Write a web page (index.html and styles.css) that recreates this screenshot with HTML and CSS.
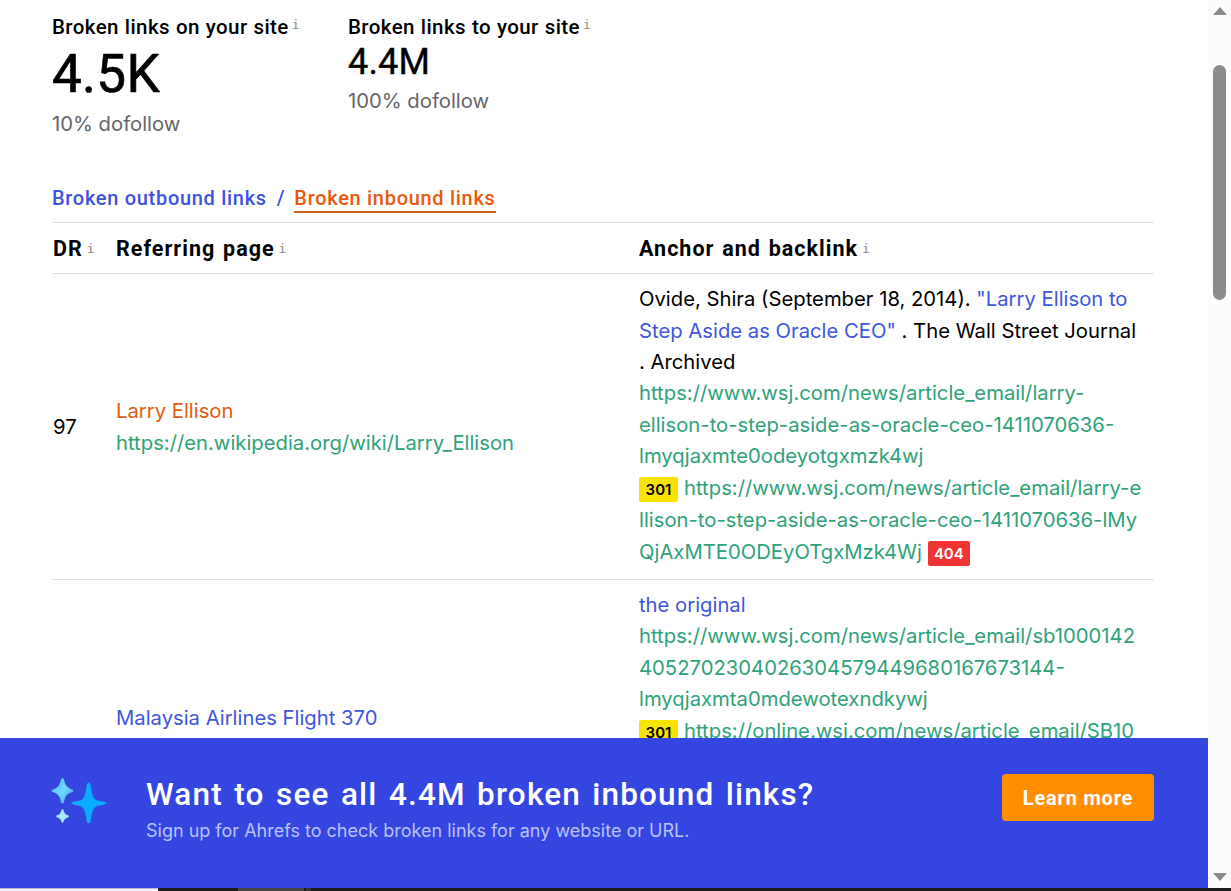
FILE: index.html
```html
<!DOCTYPE html>
<html lang="en">
<head>
<meta charset="utf-8">
<title>Broken link checker</title>
<link rel="stylesheet" href="styles.css">
</head>
<body>
<div class="screen">
  <div class="viewport">
    <div class="page">
      <main class="report">
        <section class="stats">
          <div class="stat stat-main">
            <div class="stat-label"><span>Broken links on your site</span><sup class="info">i</sup></div>
            <div class="stat-value">4.5K</div>
            <div class="stat-note">10% dofollow</div>
          </div>
          <div class="stat">
            <div class="stat-label"><span>Broken links to your site</span><sup class="info">i</sup></div>
            <div class="stat-value">4.4M</div>
            <div class="stat-note">100% dofollow</div>
          </div>
        </section>
        <nav class="tabs">
          <a class="tab">Broken outbound links</a><span class="slash">/</span><a class="tab tab-active">Broken inbound links</a>
        </nav>
        <div class="row head">
          <div><span class="th th-dr">DR</span><sup class="info">i</sup></div>
          <div><span class="th">Referring page</span><sup class="info">i</sup></div>
          <div><span class="th">Anchor and backlink</span><sup class="info">i</sup></div>
        </div>
        <div class="row first">
          <div class="dr">97</div>
          <div class="ref">
            <a class="orange">Larry Ellison</a><br>
            <a class="green">https://en.wikipedia.org/wiki/Larry_Ellison</a>
          </div>
          <div class="links">
            <div>Ovide, Shira (September 18, 2014). <a class="blue">"Larry Ellison to</a></div>
            <div><a class="blue">Step Aside as Oracle CEO"</a> . The Wall Street Journal</div>
            <div>. Archived</div>
            <div class="green">https://www.wsj.com/news/article_email/larry-</div>
            <div class="green">ellison-to-step-aside-as-oracle-ceo-1411070636-</div>
            <div class="green">lmyqjaxmte0odeyotgxmzk4wj</div>
            <div class="green tagged"><span class="tag yellow">301</span>https://www.wsj.com/news/article_email/larry-e</div>
            <div class="green tagged">llison-to-step-aside-as-oracle-ceo-1411070636-lMy</div>
            <div class="green tagged">QjAxMTE0ODEyOTgxMzk4Wj<span class="tag red">404</span></div>
          </div>
        </div>
        <div class="row second">
          <div class="dr"></div>
          <div class="ref"><a class="blue">Malaysia Airlines Flight 370</a></div>
          <div class="links">
            <div class="blue">the original</div>
            <div class="green">https://www.wsj.com/news/article_email/sb1000142</div>
            <div class="green">4052702304026304579449680167673144-</div>
            <div class="green">lmyqjaxmta0mdewotexndkywj</div>
            <div class="green tagged"><span class="tag yellow">301</span>https://online.wsj.com/news/article_email/SB10</div>
          </div>
        </div>
      </main>
      <aside class="banner">
        <svg class="sparkles" viewBox="0 0 56 46" width="56" height="46">
          <defs>
            <linearGradient id="mid" x1="0" y1="0" x2="1" y2="1"><stop offset="0" stop-color="#36bdf8"/><stop offset=".5" stop-color="#72d6ff"/><stop offset="1" stop-color="#28a8f5"/></linearGradient>
          </defs>
          <path fill="url(#mid)" d="M11.5 0Q13 0 13.4 3Q14.500 9 20 11.200Q22.500 11.600 22.500 12.800Q22.500 14 20 14.500Q14.700 16 13.400 22Q13 25.500 11.500 25.500Q10 25.500 9.600 22Q8.300 16 3 14.500Q.500 14 .500 12.800Q.500 11.600 3 11.200Q8.500 9 9.600 3Q10 0 11.500 0Z"/>
          <path fill="#a8e6ff" d="M11.500 31Q12.300 31 12.700 33Q13.500 36 16.300 37Q18 37.500 18 38.200Q18 38.900 16.300 39.400Q13.500 40.400 12.700 43Q12.300 45 11.500 45Q10.700 45 10.300 43Q9.500 40.400 6.700 39.400Q5 38.900 5 38.200Q5 37.500 6.700 37Q9.500 36 10.300 33Q10.700 31 11.500 31Z"/>
          <path fill="#0aacff" d="M37.700 4.500Q39.300 4.500 39.800 8Q41.500 21 45 22Q46.500 22.600 52 23.500Q55.400 24 55.400 25.100Q55.400 26.200 52 26.800Q46.500 27.700 45 28.500Q41.500 30 39.800 42Q39.300 45.300 37.700 45.300Q36.100 45.300 35.600 42Q33.900 30 30.400 28.500Q28.900 27.700 23.400 26.800Q20.500 26.200 20.500 25.100Q20.500 24 23.400 23.500Q28.900 22.600 30.400 22Q33.900 21 35.600 8Q36.100 4.500 37.700 4.500Z"/>
        </svg>
        <div class="pitch">
          <div class="pitch-title">Want to see all 4.4M broken inbound links?</div>
          <div class="pitch-text">Sign up for Ahrefs to check broken links for any website or URL.</div>
        </div>
        <button class="cta">Learn more</button>
      </aside>
    </div>
    <div class="scrollbar">
      <i class="arrow up"></i>
      <i class="thumb"></i>
      <i class="arrow down"></i>
    </div>
  </div>
  <div class="edge"><i class="edge-light"></i><i class="edge-dark"></i><i class="edge-gray"></i><i class="edge-gap"></i><i class="edge-slate"></i></div>
</div>
</body>
</html>
```
FILE: styles.css
```css
* { box-sizing: border-box; }
body { margin: 0; font-family: Inter, sans-serif; font-size: 20.25px; color: #000; background: #fff; }
.screen { display: flex; flex-direction: column; width: 1231px; height: 891px; overflow: hidden; }
.viewport { display: flex; height: 888px; }
.page { display: flex; flex-direction: column; width: 1208px; }
.report { height: 738px; padding: 12px 54px 0 52px; overflow: hidden; white-space: nowrap; }

.stats { display: flex; height: 168px; }
.stat { width: 296px; }
.stat-label { height: 30px; line-height: 30px; font-family: Roboto, sans-serif; font-size: 20.500px; font-weight: 500; letter-spacing: .4px; word-spacing: .5px; }
.stat-value { height: 40px; line-height: 40px; font-family: Roboto, sans-serif; font-size: 36px; letter-spacing: .2px; -webkit-text-stroke: .4px #000; }
.stat-main .stat-value { height: 63px; line-height: 64px; font-size: 53px; letter-spacing: .3px; -webkit-text-stroke-width: .7px; }
.stat-note { height: 38px; line-height: 38px; color: #666; }
.info { margin-left: 3px; font: 13px/1 "DejaVu Sans Mono", monospace; letter-spacing: 0; color: #888; vertical-align: 5px; }
.head .info { margin-left: 4px; vertical-align: 3px; }

.tabs { display: flex; height: 42px; font-family: Roboto, sans-serif; font-size: 20px; font-weight: 500; letter-spacing: .7px; line-height: 36px; color: #3d52de; }
.tab { height: 33px; }
.slash { width: 27.500px; padding-left: 10px; }
.tab-active { color: #e8590c; border-bottom: 2px solid #d4621f; }

.row { display: grid; grid-template-columns: 64px 523px 1fr; align-items: center; border-top: 1px solid #dedede; }
.head { height: 51px; font-family: Roboto, sans-serif; font-size: 21.500px; font-weight: 700; }
.th { letter-spacing: 1px; word-spacing: 1.500px; }
.dr, .th-dr { padding-left: 1px; }
.first { height: 306px; }
.ref { line-height: 31.400px; }
.links > div { height: 31.400px; line-height: 31.400px; }
.links > .tagged { height: 32.400px; line-height: 32.400px; }
.first .links { margin-bottom: 1px; }
.second { height: 307px; align-items: start; padding-top: 9px; }
.second .ref { padding-top: 113px; }
.blue { color: #4056dd; }
.green { color: #30a279; }
.orange { color: #e05c12; }
.tag { display: inline-block; width: 39px; height: 25px; line-height: 25px; border-radius: 2px; font-size: 15px; font-weight: 600; text-align: center; vertical-align: 0; }
.yellow { margin-right: 6px; background: #f9e300; color: #000; }
.red { width: 42px; margin-left: 6px; background: #f03434; color: #fff; }

.banner { display: flex; height: 150px; padding: 36px 54px 0 51px; background: #3546e0; }
.sparkles { margin: 4px 39px 0 0; }
.pitch { flex: 1; white-space: nowrap; }
.pitch-title { height: 41px; line-height: 41px; font-family: Roboto, sans-serif; font-size: 31.500px; font-weight: 500; letter-spacing: 1.150px; word-spacing: 2.500px; color: #fff; }
.pitch-text { line-height: 32px; font-size: 18px; color: #b9c1f6; }
.cta { width: 152px; height: 47px; padding: 0; border: 0; border-radius: 4px; background: #ff8f00; color: #fff; font: 700 20px Roboto, sans-serif; letter-spacing: .8px; }

.scrollbar { display: flex; flex-direction: column; align-items: center; width: 23px; padding-top: 7px; background: #fcfcfc; }
.arrow { border: 7px solid transparent; }
.up { border-top: 0; border-bottom: 8px solid #8a8a8a; }
.down { margin-top: 573px; border-bottom: 0; border-top: 8px solid #8a8a8a; }
.thumb { width: 13px; height: 235px; margin-top: 50px; border-radius: 7px; background: #8b8b8b; }

.edge { display: flex; height: 3px; background: #1d1d1c; }
.edge-light { width: 158px; background: #f3f3f3; border-top: 1px solid #b5bbdc; }
.edge-dark { width: 80px; }
.edge-gray { width: 66px; background: #454545; }
.edge-gap { width: 2px; }
.edge-slate { width: 5px; background: #343438; }
```
